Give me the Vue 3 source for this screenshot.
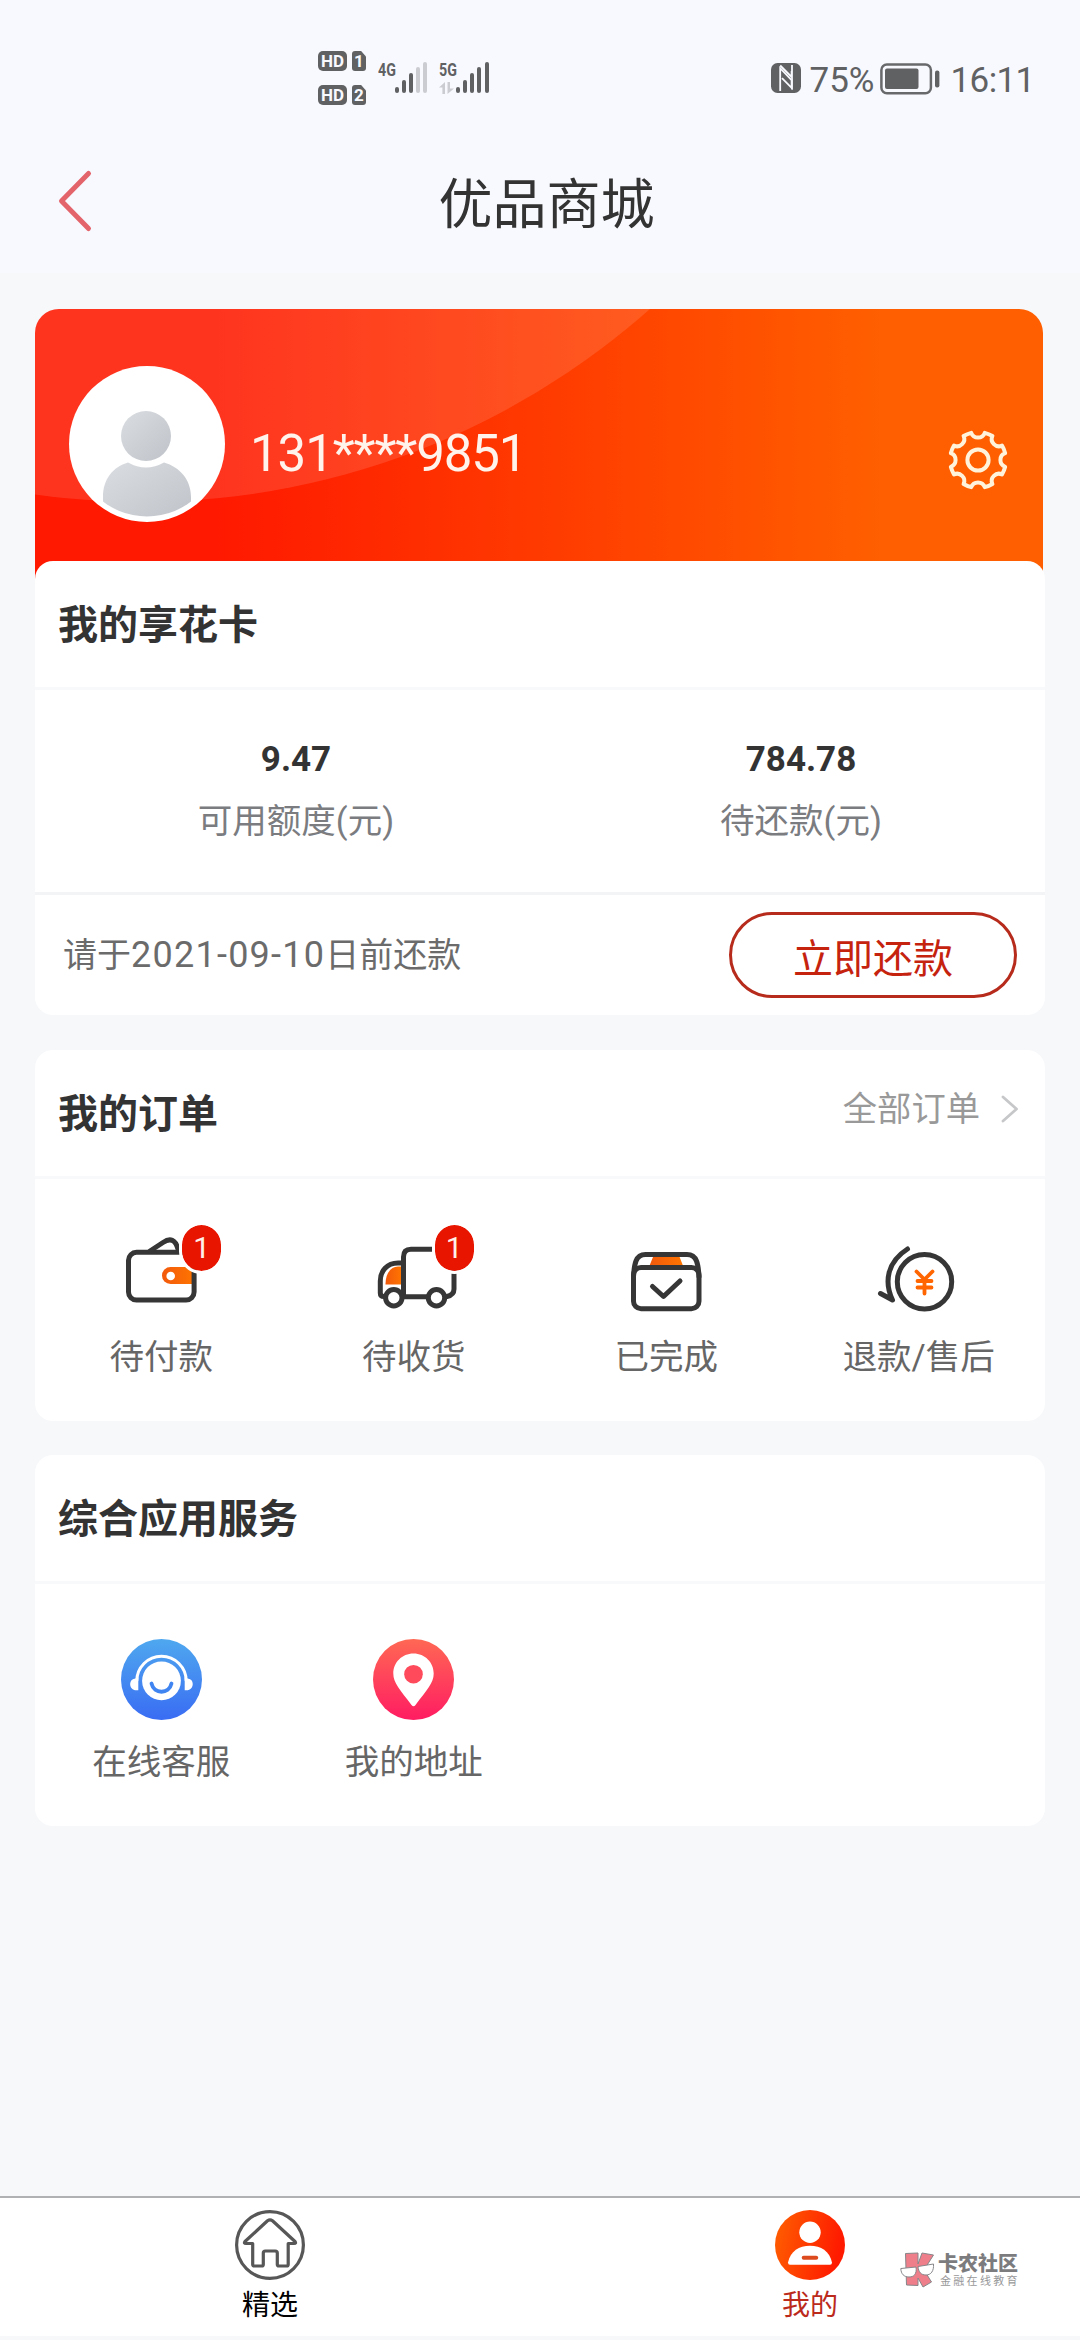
<script setup>
const orders = [
  { key: 'wallet', label: '待付款', badge: 1 },
  { key: 'truck', label: '待收货', badge: 1 },
  { key: 'done', label: '已完成' },
  { key: 'refund', label: '退款/售后' },
]

const signals = [
  { type: '4G', level: 3 },
  { type: '5G', level: 5 },
]
const barHeights = [6, 13, 20, 26, 31]

// Cog outline: eight teeth on radius 28 with round notches between them
const point = (deg) => {
  const a = (deg * Math.PI) / 180
  return `${(32 + 28 * Math.sin(a)).toFixed(2)} ${(32 - 28 * Math.cos(a)).toFixed(2)}`
}
let gearPath = `M${point(-14)}`
for (let k = 0; k < 8; k++) {
  gearPath += ` A7.2 7.2 0 0 0 ${point(k * 45 + 14)} A28 28 0 0 1 ${point(k * 45 + 31)}`
}
gearPath += 'Z'
</script>

<template>
  <div class="page">
    <header class="top">
      <div class="status">
        <div class="hd-list">
          <div v-for="n in 2" :key="n" class="hd-row">
            <span class="hd">HD</span>
            <span class="sim">{{ n }}</span>
          </div>
        </div>
        <div v-for="s in signals" :key="s.type" class="signal">
          <div class="sig-side">
            <span class="sig-type">{{ s.type }}</span>
            <svg v-if="s.type === '5G'" class="arrows" width="15" height="12" viewBox="0 0 15 12">
              <path d="M6 12H3.4V5.5H0L6 0ZM8.5 0H11V6.5H15L8.5 12Z" fill="#cbccd1" />
            </svg>
          </div>
          <div class="bars">
            <i v-for="(h, i) in barHeights" :key="i" :class="{ off: i >= s.level }" :style="{ height: h + 'px' }"></i>
          </div>
        </div>
        <svg class="nfc" width="30" height="30" viewBox="0 0 30 30">
          <rect width="30" height="30" rx="6.5" fill="#606163" />
          <path d="M9.2 28V5.2L20.6 17V24.8L11 15.2" fill="none" stroke="#f8f9fe" stroke-width="1.8" />
          <path d="M9.2 2.5L20.6 14V8M21 2V26.5" fill="none" stroke="#f8f9fe" stroke-width="1.8" />
        </svg>
        <span class="percent">75%</span>
        <svg class="battery" width="60" height="32" viewBox="0 0 60 32">
          <rect x="1.4" y="1.4" width="49.5" height="28.8" rx="5.5" fill="none" stroke="#68696b" stroke-width="2.5" />
          <rect x="5" y="5.5" width="33.5" height="20.5" rx="2" fill="#606163" />
          <rect x="55" y="7.5" width="4.4" height="17" rx="2" fill="#606163" />
        </svg>
        <span class="clock">16:11</span>
      </div>
      <div class="nav">
        <svg class="back" width="36" height="64" viewBox="0 0 36 64">
          <path d="M31.500 4.500L4.500 32L31.500 59.500" fill="none" stroke="#e4646c" stroke-width="5" stroke-linecap="round" stroke-linejoin="round" />
        </svg>
        <h1>优品商城</h1>
      </div>
    </header>

    <main>
      <section class="account">
        <div class="hero">
          <svg class="sheen" width="1007" height="266" viewBox="0 0 1007 266">
            <circle cx="107" cy="-572" r="765" fill="#fff" fill-opacity=".12" />
          </svg>
          <svg class="avatar" width="156" height="156" viewBox="0 0 156 156">
            <defs>
              <linearGradient id="grey" x1="0" y1="0" x2="1" y2="1">
                <stop offset="0" stop-color="#dadde1" />
                <stop offset="1" stop-color="#bfc3c9" />
              </linearGradient>
              <clipPath id="face"><circle cx="78" cy="78" r="72.5" /></clipPath>
            </defs>
            <circle cx="78" cy="78" r="78" fill="#fff" />
            <path d="M34 156V131C34 113 44 101 59 96.5Q77 106.500 95 96.500C111 101 122 114 122 131V156Z" fill="url(#grey)" clip-path="url(#face)" />
            <circle cx="77" cy="70" r="25" fill="url(#grey)" />
          </svg>
          <span class="phone">131****9851</span>
          <svg class="gear" width="64" height="64" viewBox="0 0 64 64" fill="none" stroke="#fff3dc" stroke-width="4" stroke-linejoin="round">
            <path :d="gearPath" />
            <circle cx="32" cy="32" r="10.600" />
          </svg>
        </div>

        <div class="card overlap">
          <div class="card-head"><h2>我的享花卡</h2></div>
          <div class="amounts">
            <div class="amount"><b>9.47</b><span>可用额度(元)</span></div>
            <div class="amount"><b>784.78</b><span>待还款(元)</span></div>
          </div>
          <div class="repay">
            <p>请于<span class="date">2021-09-10</span>日前还款</p>
            <button>立即还款</button>
          </div>
        </div>
      </section>

      <section class="card">
        <div class="card-head">
          <h2>我的订单</h2>
          <a class="more">
            全部订单
            <svg width="18" height="28" viewBox="0 0 18 28">
              <path d="M2 2L15.500 14L2 26" fill="none" stroke="#c6c7c9" stroke-width="2.800" stroke-linecap="round" stroke-linejoin="round" />
            </svg>
          </a>
        </div>
        <div class="grid orders">
          <div v-for="o in orders" :key="o.key" class="cell">
            <div class="icon">
              <svg width="90" height="90" viewBox="0 0 90 90" fill="none" stroke="#363636" stroke-width="5" stroke-linecap="round" stroke-linejoin="round">
                <defs>
                  <linearGradient id="orange" x1="0" x2="1">
                    <stop offset="0" stop-color="#f2590c" />
                    <stop offset="1" stop-color="#ff7500" />
                  </linearGradient>
                </defs>
                <template v-if="o.key === 'wallet'">
                  <path d="M78 42H54.500A8.500 8.500 0 0 0 54.500 59H78Z" fill="url(#orange)" stroke="none" />
                  <circle cx="54.700" cy="51" r="4.300" fill="#fff" stroke="none" />
                  <rect x="12.500" y="27.300" width="65.600" height="47.800" rx="8" />
                  <path d="M34 26L47 17.500Q58 10 62 24" />
                </template>
                <template v-else-if="o.key === 'truck'">
                  <path d="M32.500 41.500H29C21 42 16.500 49 16.500 59.500H32.500Z" fill="url(#orange)" stroke="none" />
                  <path d="M34.500 38H29C18 38 11.300 46 11.300 56V68Q11.300 71.500 15 71.500" />
                  <path d="M58 71.800H34.500V32Q34.500 24.300 42 24.300H79Q85 24.300 85 30V64Q85 70 78 71.500" />
                  <circle cx="24.800" cy="72.700" r="8.200" fill="#fff" />
                  <circle cx="67.500" cy="72.700" r="8.200" fill="#fff" />
                </template>
                <template v-else-if="o.key === 'done'">
                  <path d="M32.400 31H58.200L62.500 42H28Z" fill="url(#orange)" stroke="none" />
                  <path d="M12.500 52Q13 41 15 36Q17.500 29.500 24.500 29.500H66Q73 29.500 75.500 36Q77.500 41 78 52" />
                  <rect x="12.500" y="42.500" width="65.500" height="41.300" rx="7.500" />
                  <path d="M31.500 61.500L42.500 71.500L59 56" />
                </template>
                <template v-else>
                  <circle cx="50.500" cy="56.700" r="27.200" />
                  <path d="M33.500 24C13 37 10 57 18.500 75L6.500 68.500" />
                  <path d="M42.500 46.500L50.500 54.500L58.500 46.500M50.500 54.500V68.500M43.500 56H57.500M43.500 62.500H57.500" stroke="#ff6500" stroke-width="3.800" />
                </template>
              </svg>
              <span v-if="o.badge" class="badge">{{ o.badge }}</span>
            </div>
            <span class="label">{{ o.label }}</span>
          </div>
        </div>
      </section>

      <section class="card">
        <div class="card-head"><h2>综合应用服务</h2></div>
        <div class="grid services">
          <div class="cell">
            <svg width="81" height="81" viewBox="0 0 81 81">
              <defs>
                <linearGradient id="blue" x2="0" y2="1">
                  <stop offset="0" stop-color="#4fa8ef" />
                  <stop offset="1" stop-color="#396cf3" />
                </linearGradient>
              </defs>
              <circle cx="40.500" cy="40.500" r="40.500" fill="url(#blue)" />
              <path d="M15.800 42A24.700 24.700 0 0 1 65.200 42" fill="none" stroke="#fff" stroke-width="3" />
              <path d="M17.300 38.500V51.300H15.500C7.500 51.300 7.500 40.500 13.500 39.800ZM63.700 38.500V51.300H65.500C73.500 51.300 73.500 40.500 67.500 39.800Z" fill="#fff" />
              <circle cx="40.500" cy="41.800" r="19.400" fill="#fff" />
              <path d="M30.500 44.500C33 55.500 48 55.500 50.500 44.500" fill="none" stroke="#3f84f1" stroke-width="3.800" stroke-linecap="round" />
            </svg>
            <span class="label">在线客服</span>
          </div>
          <div class="cell">
            <svg width="81" height="81" viewBox="0 0 81 81">
              <defs>
                <linearGradient id="pink" x2="0" y2="1">
                  <stop offset="0" stop-color="#ff6854" />
                  <stop offset="1" stop-color="#ff1c62" />
                </linearGradient>
              </defs>
              <circle cx="40.500" cy="40.500" r="40.500" fill="url(#pink)" />
              <path d="M40.500 14.500C52 14.500 60.700 23.500 60.700 34.500C60.700 44 54 50.500 42.500 66Q40.500 68.500 38.500 66C27 50.500 20.300 44 20.300 34.500C20.300 23.500 29 14.500 40.500 14.500Z" fill="#fff" />
              <circle cx="40.500" cy="35.200" r="9.300" fill="#ff4a5b" />
            </svg>
            <span class="label">我的地址</span>
          </div>
        </div>
      </section>
    </main>

    <footer>
      <div class="tab">
        <svg width="70" height="70" viewBox="0 0 70 70" fill="none" stroke="#575757" stroke-width="3.200" stroke-linejoin="round">
          <circle cx="35" cy="35" r="33.400" />
          <path d="M32.500 10.800Q35 9 37.500 10.800L60 31.500Q61.500 33.500 59 33.500H53.200V54.500Q53.200 56 51.700 56H44Q42.300 56 42.300 54.500V43Q42.300 41 40.300 41H30.300Q28.300 41 28.300 43V54.500Q28.300 56 26.800 56H19.500Q17.700 56 17.700 54.500V33.500H11Q8.500 33.500 10 31.500Z" />
        </svg>
        <span>精选</span>
      </div>
      <div class="tab active">
        <svg width="70" height="70" viewBox="0 0 70 70">
          <defs>
            <linearGradient id="me" x1="0" x2="1" y1="0" y2=".2">
              <stop offset="0" stop-color="#ff6000" />
              <stop offset="1" stop-color="#ff1a00" />
            </linearGradient>
          </defs>
          <circle cx="35" cy="35" r="35" fill="url(#me)" />
          <circle cx="35" cy="22.300" r="10.700" fill="#fff" />
          <path d="M13 52.500C15.500 41 24 35.700 35 35.700S54.500 41 57 52.500Q57 54.800 55 54.800H15Q13 54.800 13 52.500Z" fill="#fff" />
          <rect x="26.700" y="45.800" width="16.500" height="4" rx="2" fill="#dc4a1e" />
        </svg>
        <span>我的</span>
      </div>
      <div class="mark">
        <svg width="36" height="36" viewBox="0 0 36 36" stroke="#87868a" stroke-width="1" stroke-linejoin="round">
          <path d="M5.500 1.500L18 1V12L22 1L33.500 3L24 18L31.500 30L23 35L18 26V33.500L6.500 33Z" fill="#ee7e89" />
          <path d="M.8 16.500L16 15C17 22 14 25 9 25C4 25 1 22 .8 16.500ZM18 14.500L33.500 12C34 19 31 23 26 23C21 23 18.500 20 18 14.500Z" fill="#fff" />
        </svg>
        <div class="mark-text"><b>卡农社区</b><small>金融在线教育</small></div>
      </div>
    </footer>
  </div>
</template>

<style>
body {
  margin: 0;
  background: #f7f8fa;
}
</style>

<style scoped>
.page {
  box-sizing: border-box;
  display: flex;
  flex-direction: column;
  width: 1080px;
  height: 2340px;
  padding-bottom: 4px;
  overflow: hidden;
  background: #f7f8fa;
  color: #333;
  font-family: Roboto, "Noto Sans CJK SC", sans-serif;
}
h1, h2, p { margin: 0; }
svg { display: block; flex: none; }

.top { height: 273px; background: #f8f9fe; }
.status {
  display: flex;
  align-items: flex-start;
  height: 133px;
  color: #606163;
}
.hd-list {
  display: flex;
  flex-direction: column;
  gap: 14px;
  margin: 51px 0 0 318px;
}
.hd-row { display: flex; gap: 5px; }
.hd, .sim {
  height: 20px;
  border-radius: 5px;
  background: #606163;
  color: #f8f9fe;
  font: 700 17px/20px Roboto, sans-serif;
  text-align: center;
}
.hd { width: 29px; }
.sim {
  width: 14px;
  border-radius: 3px;
  clip-path: polygon(0 0, 65% 0, 100% 28%, 100% 100%, 0 100%);
}
.signal { display: flex; align-items: flex-end; height: 31px; margin: 62px 0 0 11.500px; }
.sig-side {
  width: 17px;
  height: 31px;
}
.sig-type {
  display: block;
  width: 24px;
  font: 700 19px/16px Roboto, sans-serif;
  transform: scaleX(.75);
  transform-origin: 0 0;
}
.arrows { margin-top: 4px; }
.bars { display: flex; align-items: flex-end; gap: 3.200px; }
.bars i { width: 4px; border-radius: 2px; background: #606163; }
.bars .off { background: #cbccd1; }
.nfc { margin: 63px 0 0 282px; }
.percent { width: 71px; margin: 61px 0 0 9px; font-size: 35px; line-height: 40px; }
.battery { margin: 63px 0 0 -1px; }
.clock { margin: 61px 0 0 11px; font-size: 35px; line-height: 40px; letter-spacing: -.6px; }

.nav {
  display: grid;
  grid-template-columns: 200px 1fr 200px;
  align-items: center;
  height: 140px;
}
.back { margin: -4px 0 0 57px; }
h1 {
  padding: 6px 0 0 13px;
  font-size: 54px;
  font-weight: 400;
  line-height: 80px;
  text-align: center;
}

main {
  display: flex;
  flex: 1;
  flex-direction: column;
  gap: 34px;
  padding: 36px 35px 0;
}
.account { margin-bottom: 1px; }
.hero {
  position: relative;
  display: flex;
  box-sizing: border-box;
  width: 1008px;
  height: 270px;
  padding: 57px 34px 0;
  border-radius: 24px 24px 0 0;
  overflow: hidden;
  background: linear-gradient(90deg, #ff1900 18%, #ff3c00 52%, #ff5f00 84%);
}
.sheen { position: absolute; left: 0; top: 0; }
.avatar, .phone, .gear { position: relative; }
.phone {
  flex: 1;
  margin: 58px 0 0 25px;
  color: #fff3ec;
  font-size: 51px;
  line-height: 60px;
  letter-spacing: -1.100px;
}
.gear { margin: 62px -1px 0 0; }

.card { border-radius: 18px; background: #fff; }
.overlap { position: relative; margin-top: -18px; }
.card-head {
  display: flex;
  align-items: center;
  justify-content: space-between;
  height: 126px;
  padding: 0 26px 0 23px;
  border-bottom: 3px solid #f7f9fa;
}
h2 { margin-top: 4px; font-size: 40px; font-weight: 700; line-height: 60px; }
.amounts {
  display: grid;
  grid-template-columns: 1fr 1fr;
  height: 202px;
  border-bottom: 3px solid #f3f4f5;
}
.amount {
  display: flex;
  flex-direction: column;
  align-items: center;
  padding: 49px 0 0 17px;
}
.amount b { font-size: 35px; line-height: 42px; }
.amount span { margin-top: 15px; color: #7a7c7f; font-size: 34.500px; line-height: 50px; }
.repay {
  display: flex;
  align-items: center;
  justify-content: space-between;
  height: 120px;
  padding: 0 28px;
  color: #6b6b6b;
  font-size: 34px;
}
.repay p { margin-top: -6px; }
.date { font-size: 36px; letter-spacing: 1.250px; }
button {
  box-sizing: border-box;
  width: 288px;
  height: 86px;
  padding: 10px 0 0;
  border: 3px solid #b62b1c;
  border-radius: 43px;
  background: #fff;
  color: #c6230f;
  font: 400 40px/60px Roboto, "Noto Sans CJK SC", sans-serif;
}
.more {
  display: flex;
  align-items: center;
  gap: 21px;
  margin-top: -9px;
  color: #999;
  font-size: 34.300px;
  line-height: 50px;
}

.grid { display: grid; grid-template-columns: repeat(4, 1fr); height: 242px; }
.cell { display: flex; flex-direction: column; align-items: center; }
.orders .cell { padding-top: 46px; }
.services .cell { padding-top: 55px; }
.icon { position: relative; height: 90px; }
.label { margin-top: 17px; color: #666; font-size: 34.500px; line-height: 50px; }
.badge {
  position: absolute;
  left: 63px;
  top: -3px;
  width: 39px;
  height: 46px;
  border: 3px solid #fff;
  border-radius: 23px;
  background: #e81600;
  background-clip: padding-box;
  color: #fff0ea;
  font-size: 30px;
  line-height: 46px;
  text-align: center;
}

footer {
  position: relative;
  display: grid;
  grid-template-columns: 1fr 1fr;
  height: 138px;
  border-top: 2px solid #b0b1b3;
  background: #fff;
}
.tab {
  display: flex;
  flex-direction: column;
  align-items: center;
  padding-top: 12px;
  color: #000;
  font-size: 28px;
  line-height: 40px;
}
.tab span { margin-top: 6px; }
.active { color: #bb2a1b; }
.mark {
  position: absolute;
  left: 900px;
  top: 54px;
  display: flex;
  gap: 2px;
}
.mark-text { display: flex; flex-direction: column; padding-top: 1px; color: #7c7c7e; white-space: nowrap; }
.mark-text b { font-size: 20px; font-weight: 900; line-height: 22px; }
.mark-text small { padding-left: 2px; color: #98989a; font-size: 11px; line-height: 13px; letter-spacing: 2.300px; }
</style>
